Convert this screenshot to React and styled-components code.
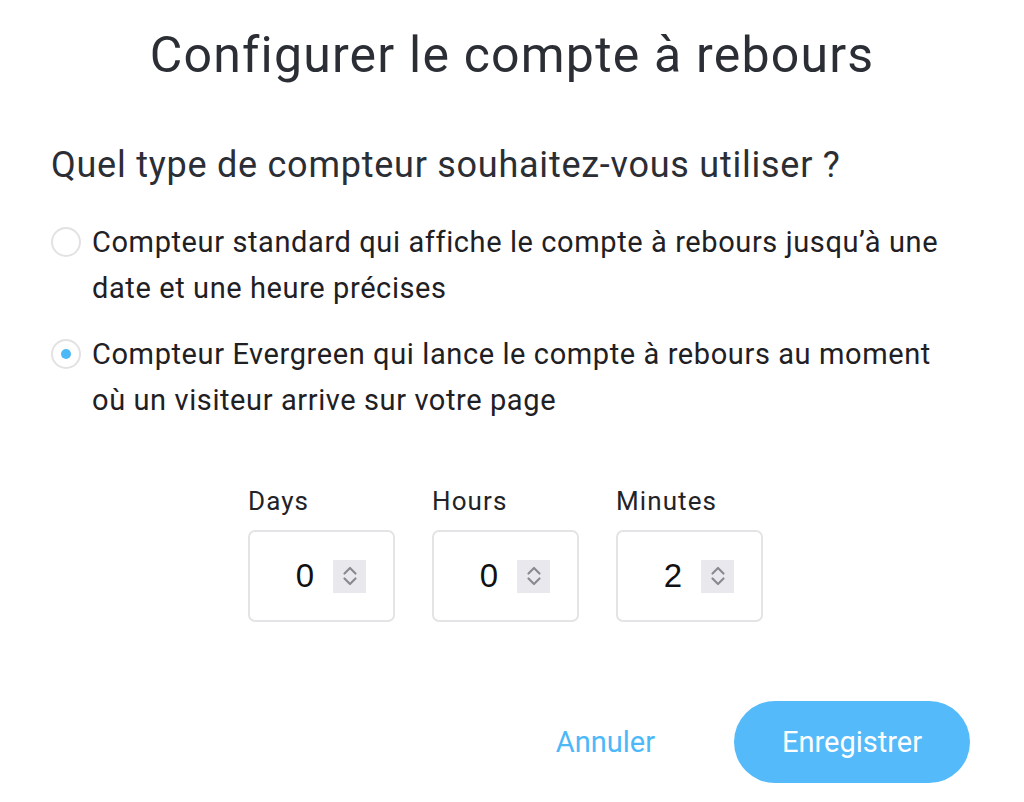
import React, { useState } from 'react';
import styled, { createGlobalStyle } from 'styled-components';

const GlobalStyle = createGlobalStyle`
    html, body {
        margin: 0;
        padding: 0;
        background: #ffffff;
    }
    body {
        font-family: Roboto, "Liberation Sans", Arial, sans-serif;
    }
`;

const Page = styled.div`
    width: 1024px;
    height: 802px;
    box-sizing: border-box;
    padding: 24px 54px 0 51px;
    display: flex;
    flex-direction: column;
`;

const Title = styled.h1`
    margin: 0;
    font-size: 50px;
    line-height: 62px;
    font-weight: 400;
    letter-spacing: 1.2px;
    color: #2b2e34;
    text-align: center;
    padding-left: 3px;
`;

const Question = styled.h2`
    margin: 57px 0 0;
    font-size: 36px;
    line-height: 44px;
    font-weight: 400;
    letter-spacing: 0.75px;
    color: #2b2e34;
`;

const Options = styled.div`
    margin-top: 32px;
    display: flex;
    flex-direction: column;
    gap: 20px;
`;

const Option = styled.label`
    display: flex;
    align-items: flex-start;
    gap: 11px;
    cursor: pointer;
`;

const Radio = styled.span`
    flex: none;
    width: 30px;
    height: 30px;
    margin-top: 8px;
    box-sizing: border-box;
    border: 2px solid #e2e2e4;
    border-radius: 50%;
    display: flex;
    align-items: center;
    justify-content: center;

    &::after {
        content: '';
        width: 10px;
        height: 10px;
        border-radius: 50%;
        background: ${p => (p.$checked ? '#4db8f8' : 'transparent')};
    }
`;

const OptionText = styled.span`
    font-size: 29px;
    line-height: 46px;
    letter-spacing: 0.6px;
    color: #1f2023;
`;

const Fields = styled.div`
    margin: 62px 0 0 197px;
    display: flex;
    gap: 37px;
`;

const Field = styled.div`
    display: flex;
    flex-direction: column;
    gap: 13px;
`;

const FieldLabel = styled.span`
    font-size: 26px;
    line-height: 32px;
    letter-spacing: 1.1px;
    color: #222327;
`;

const NumberBox = styled.div`
    width: 147px;
    height: 92px;
    box-sizing: border-box;
    border: 2px solid #e4e4e6;
    border-radius: 7px;
    display: flex;
    align-items: center;
    justify-content: flex-end;
    gap: 19px;
    padding-right: 27px;
`;

const NumberValue = styled.span`
    font-family: "Liberation Sans", Arial, sans-serif;
    font-size: 33px;
    color: #111;
`;

const Spinner = styled.span`
    width: 33px;
    height: 33px;
    background: #e9e9ed;
    display: flex;
    align-items: center;
    justify-content: center;
`;

const Actions = styled.div`
    margin-top: 79px;
    display: flex;
    justify-content: flex-end;
    align-items: center;
    gap: 67px;
`;

const CancelButton = styled.button`
    border: none;
    background: none;
    padding: 0 12px;
    font-family: Roboto, "Liberation Sans", Arial, sans-serif;
    font-size: 29px;
    color: #4db8f8;
    cursor: pointer;
`;

const SaveButton = styled.button`
    border: none;
    width: 236px;
    height: 82px;
    border-radius: 41px;
    background: #54baf9;
    font-family: Roboto, "Liberation Sans", Arial, sans-serif;
    font-size: 29px;
    color: #ffffff;
    cursor: pointer;
`;

const SpinIcon = () => (
    <svg width="16" height="24" viewBox="0 0 16 24" fill="none" stroke="#8a8a93" strokeWidth="2.2" strokeLinecap="round" strokeLinejoin="round">
        <path d="M2.5 9.5 L8 4 L13.5 9.5" />
        <path d="M2.5 14.5 L8 20 L13.5 14.5" />
    </svg>
);

const fields = [
    { label: 'Days', value: 0 },
    { label: 'Hours', value: 0 },
    { label: 'Minutes', value: 2 },
];

const App = () => {
    const [type, setType] = useState('evergreen');
    return (
        <Page>
            <GlobalStyle />
            <Title>Configurer le compte à rebours</Title>
            <Question>Quel type de compteur souhaitez-vous utiliser ?</Question>
            <Options>
                <Option onClick={() => setType('standard')}>
                    <Radio $checked={type === 'standard'} />
                    <OptionText>
                        Compteur standard qui affiche le compte à rebours jusqu’à une date et une heure précises
                    </OptionText>
                </Option>
                <Option onClick={() => setType('evergreen')}>
                    <Radio $checked={type === 'evergreen'} />
                    <OptionText>
                        Compteur Evergreen qui lance le compte à rebours au moment où un visiteur arrive sur votre page
                    </OptionText>
                </Option>
            </Options>
            <Fields>
                {fields.map(f => (
                    <Field key={f.label}>
                        <FieldLabel>{f.label}</FieldLabel>
                        <NumberBox>
                            <NumberValue>{f.value}</NumberValue>
                            <Spinner><SpinIcon /></Spinner>
                        </NumberBox>
                    </Field>
                ))}
            </Fields>
            <Actions>
                <CancelButton>Annuler</CancelButton>
                <SaveButton>Enregistrer</SaveButton>
            </Actions>
        </Page>
    );
};

export default App;
